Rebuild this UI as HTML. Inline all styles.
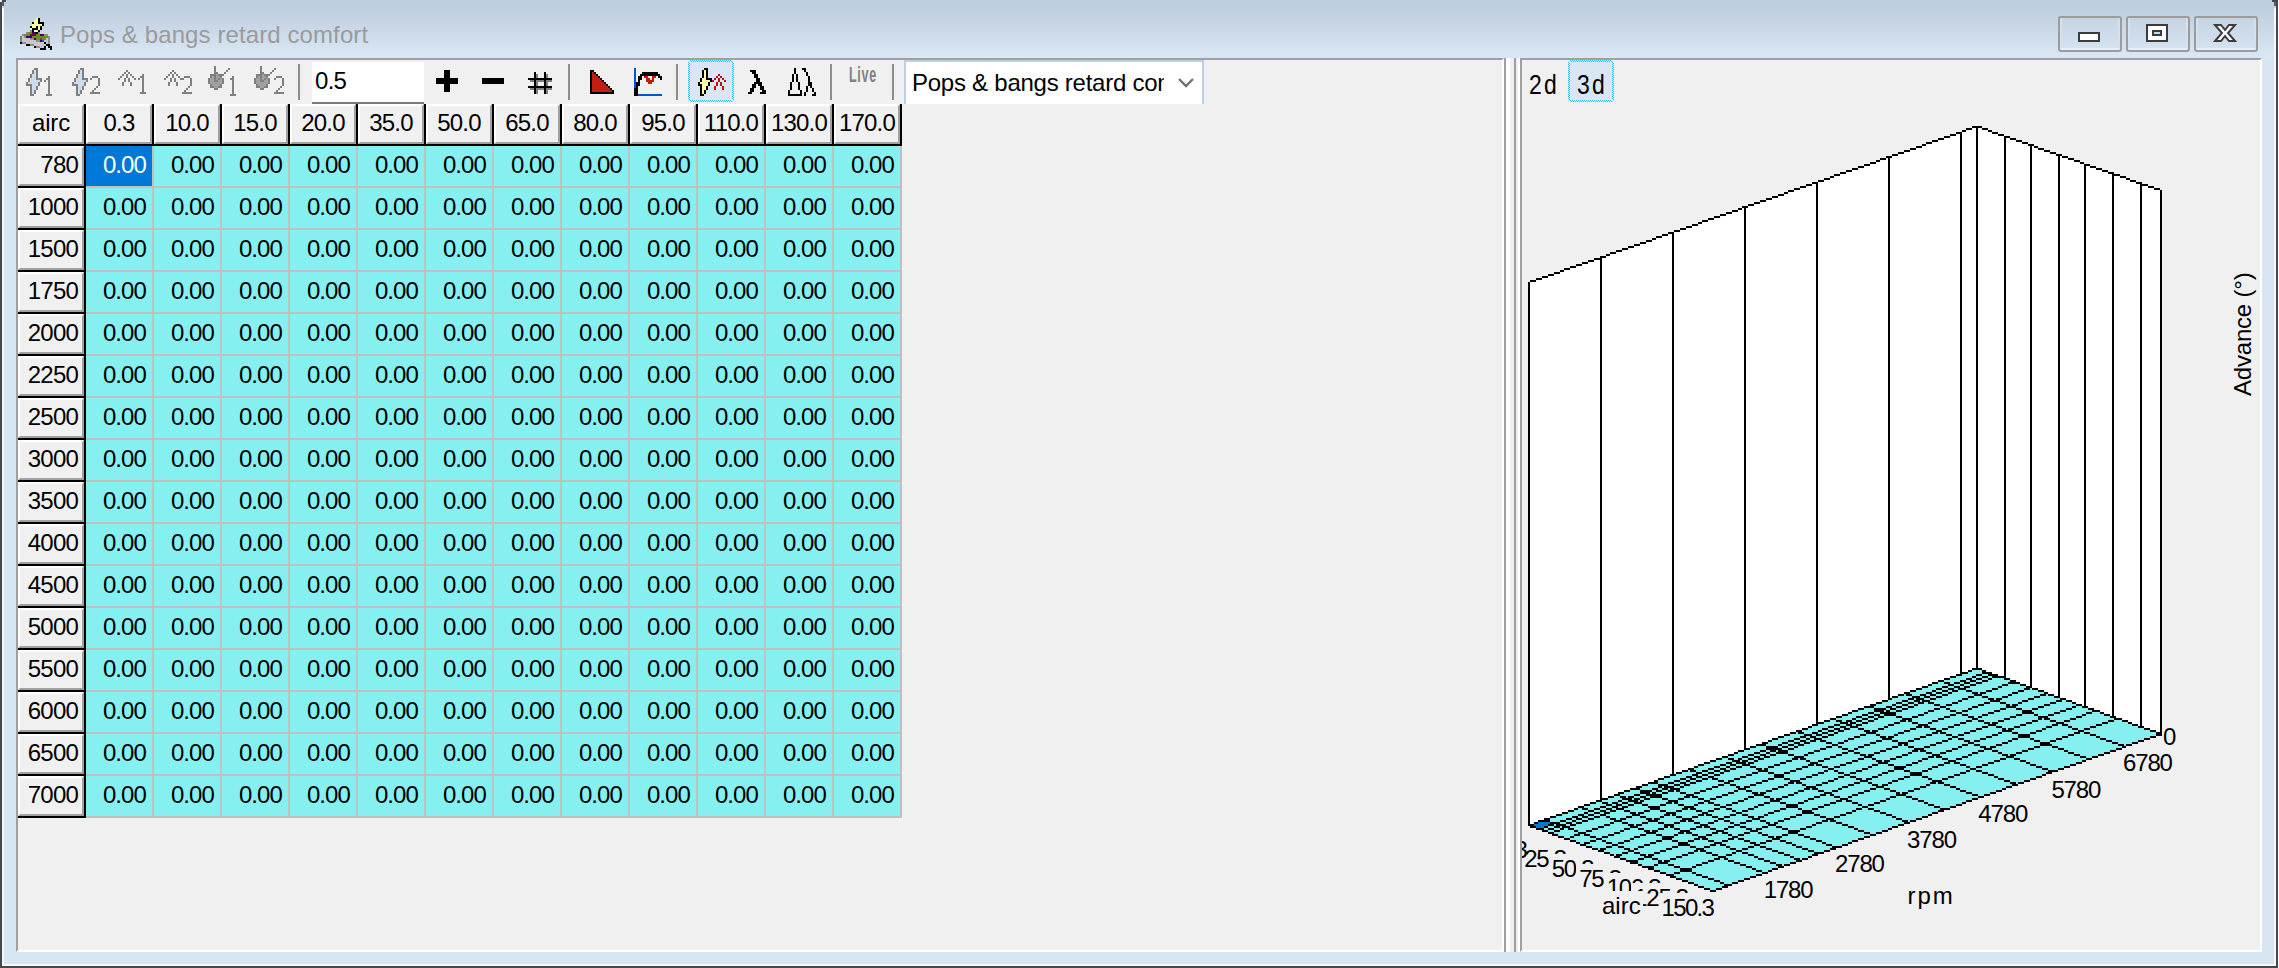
<!DOCTYPE html>
<html lang="en"><head><meta charset="utf-8"><title>Pops &amp; bangs retard comfort</title>
<style>
html,body{margin:0;padding:0}
body{width:2279px;height:968px;overflow:hidden;background:#fff;font-family:"Liberation Sans",sans-serif;font-size:24px;color:#000;position:relative}
div,span{box-sizing:border-box}
.abs{position:absolute}
#win{position:absolute;left:0;top:0;width:2278px;height:968px;border:2px solid #46484c;border-top:none;background:#c0cfdf}
#win2{position:absolute;left:0;top:0;width:2274px;height:966px;border:2px solid #f6f9fd;border-top:none;
 background:linear-gradient(#c0cfdf 0,#c0cfdf 10px,#c9d7e6 28px,#d3e0ee 44px,#d9e6f4 56px,#d9e6f4 100%);background-size:100% 58px;background-repeat:no-repeat;background-color:#d8e5f3}
#title{left:60px;top:21px;line-height:28px;color:#9b9b9b;white-space:pre;letter-spacing:.1px}
.wb{position:absolute;top:16px;width:64px;height:36px;border:2px solid #9c9c9c;border-radius:3px;background:linear-gradient(#c5d4e4,#cfdceb 60%,#d6e3f1);box-shadow:inset 0 -2px 0 #e6eef7, inset 2px 0 0 #d3e0ee, inset -2px 0 0 #d3e0ee}
.panel{position:absolute;top:58px;height:894px;background:#f0f0f0;border-style:solid;border-width:2px;border-color:#a0a0a0 #fff #fff #a0a0a0}
#tb{left:18px;top:60px;width:1484px;height:44px}
#inp{left:312px;top:62px;width:112px;height:42px;background:#fff;border-bottom:2px solid #7a7a7a;padding-left:3px;line-height:38px;letter-spacing:-0.7px}
#selb,#sel3{position:absolute;top:60px;width:46px;height:42px;background:#d9e6f4;border-radius:3px}
#combo{left:904px;top:60px;width:300px;height:44px;background:#fff;border:2px solid #bccfe5;border-bottom:none}
#combo span{position:absolute;left:6px;top:6px;width:252px;overflow:hidden;white-space:pre;line-height:30px;height:34px;letter-spacing:-0.25px}
#live{left:849px;top:62px;font-size:22px;line-height:26px;color:#808080;font-weight:bold;transform:scaleX(.57);transform-origin:0 0;letter-spacing:1.2px}
.hc{position:absolute;height:40px;width:66px;background:#f0f0f0;border-style:solid;border-width:2px;border-color:#fff #a0a0a0 #a0a0a0 #fff;line-height:33px;text-align:center;letter-spacing:-0.8px;white-space:pre}
.rh{text-align:right;padding-right:4px}
.k{position:absolute;background:#000}
#grid{left:86px;top:146px;width:816px;height:672px;display:grid;grid-template-columns:repeat(12,68px);grid-auto-rows:42px;background:#86f0f0}
#grid div{border-right:2px solid #c0c0c0;border-bottom:2px solid #c0c0c0;text-align:right;padding-right:6px;line-height:38px;letter-spacing:-0.9px;color:#000}
#grid div.s{background:#0078d7;color:#fff}
.v{position:absolute;top:58px;height:894px;width:2px}
.lb{position:absolute;white-space:pre;line-height:30px;height:30px;background:#f0f0f0;letter-spacing:-0.45px}
.pf{position:absolute;top:70px;font-size:28px;line-height:30px;transform:scaleX(.82);transform-origin:0 0;letter-spacing:2.6px}
</style></head>
<body>
<div id="win"></div><div class="abs" style="left:2px;top:0"><div id="win2"></div></div>
<div class="abs" style="left:2px;top:0;width:4px;height:2px;background:#46484c"></div><div class="abs" style="left:2px;top:2px;width:2px;height:4px;background:#5a5c60"></div><div class="abs" style="left:2px;top:6px;width:2px;height:2px;background:#c9d6e4"></div>
<div class="abs" style="left:2272px;top:0;width:4px;height:2px;background:#46484c"></div><div class="abs" style="left:2274px;top:2px;width:2px;height:4px;background:#5a5c60"></div><div class="abs" style="left:2274px;top:6px;width:2px;height:2px;background:#c9d6e4"></div>
<div class="abs" style="left:0;top:0;width:2px;height:2px;background:#dce8f4"></div>
<div id="title" class="abs">Pops &amp; bangs retard comfort</div>
<div class="wb" style="left:2058px"></div>
<div class="wb" style="left:2126px"></div>
<div class="wb" style="left:2194px"></div>
<div class="panel" style="left:16px;width:1488px"></div>
<div class="panel" style="left:1520px;width:742px"></div>
<div class="v" style="left:1504px;background:#a0a0a0"></div><div class="v" style="left:1506px;width:4px;background:#fff"></div><div class="v" style="left:1510px;width:4px;background:#f0f0f0"></div><div class="v" style="left:1514px;background:#a0a0a0"></div><div class="v" style="left:1516px;background:#f0f0f0"></div><div class="v" style="left:1518px;background:#fff"></div>
<div id="inp" class="abs">0.5</div>
<div id="selb" style="left:688px"></div>
<div id="sel3" style="left:1568px"></div>
<div id="combo" class="abs"><span>Pops &amp; bangs retard comfort</span></div>
<div id="live" class="abs">Live</div>
<div class="pf" style="left:1529px">2d</div><div class="pf" style="left:1577px">3d</div>
<div class="hc" style="left:18px;top:104px;letter-spacing:-.2px">airc</div>
<div class="hc" style="left:86px;top:104px">0.3</div>
<div class="hc" style="left:154px;top:104px">10.0</div>
<div class="hc" style="left:222px;top:104px">15.0</div>
<div class="hc" style="left:290px;top:104px">20.0</div>
<div class="hc" style="left:358px;top:104px">35.0</div>
<div class="hc" style="left:426px;top:104px">50.0</div>
<div class="hc" style="left:494px;top:104px">65.0</div>
<div class="hc" style="left:562px;top:104px">80.0</div>
<div class="hc" style="left:630px;top:104px">95.0</div>
<div class="hc" style="left:698px;top:104px">110.0</div>
<div class="hc" style="left:766px;top:104px">130.0</div>
<div class="hc" style="left:834px;top:104px">170.0</div>
<div class="hc rh" style="left:18px;top:146px">780</div>
<div class="hc rh" style="left:18px;top:188px">1000</div>
<div class="hc rh" style="left:18px;top:230px">1500</div>
<div class="hc rh" style="left:18px;top:272px">1750</div>
<div class="hc rh" style="left:18px;top:314px">2000</div>
<div class="hc rh" style="left:18px;top:356px">2250</div>
<div class="hc rh" style="left:18px;top:398px">2500</div>
<div class="hc rh" style="left:18px;top:440px">3000</div>
<div class="hc rh" style="left:18px;top:482px">3500</div>
<div class="hc rh" style="left:18px;top:524px">4000</div>
<div class="hc rh" style="left:18px;top:566px">4500</div>
<div class="hc rh" style="left:18px;top:608px">5000</div>
<div class="hc rh" style="left:18px;top:650px">5500</div>
<div class="hc rh" style="left:18px;top:692px">6000</div>
<div class="hc rh" style="left:18px;top:734px">6500</div>
<div class="hc rh" style="left:18px;top:776px">7000</div>
<div class="k" style="left:84px;top:104px;width:2px;height:714px"></div>
<div class="k" style="left:152px;top:104px;width:2px;height:42px"></div>
<div class="k" style="left:220px;top:104px;width:2px;height:42px"></div>
<div class="k" style="left:288px;top:104px;width:2px;height:42px"></div>
<div class="k" style="left:356px;top:104px;width:2px;height:42px"></div>
<div class="k" style="left:424px;top:104px;width:2px;height:42px"></div>
<div class="k" style="left:492px;top:104px;width:2px;height:42px"></div>
<div class="k" style="left:560px;top:104px;width:2px;height:42px"></div>
<div class="k" style="left:628px;top:104px;width:2px;height:42px"></div>
<div class="k" style="left:696px;top:104px;width:2px;height:42px"></div>
<div class="k" style="left:764px;top:104px;width:2px;height:42px"></div>
<div class="k" style="left:832px;top:104px;width:2px;height:42px"></div>
<div class="k" style="left:900px;top:104px;width:2px;height:42px"></div>
<div class="k" style="left:18px;top:144px;width:884px;height:2px"></div>
<div class="k" style="left:18px;top:186px;width:68px;height:2px"></div>
<div class="k" style="left:18px;top:228px;width:68px;height:2px"></div>
<div class="k" style="left:18px;top:270px;width:68px;height:2px"></div>
<div class="k" style="left:18px;top:312px;width:68px;height:2px"></div>
<div class="k" style="left:18px;top:354px;width:68px;height:2px"></div>
<div class="k" style="left:18px;top:396px;width:68px;height:2px"></div>
<div class="k" style="left:18px;top:438px;width:68px;height:2px"></div>
<div class="k" style="left:18px;top:480px;width:68px;height:2px"></div>
<div class="k" style="left:18px;top:522px;width:68px;height:2px"></div>
<div class="k" style="left:18px;top:564px;width:68px;height:2px"></div>
<div class="k" style="left:18px;top:606px;width:68px;height:2px"></div>
<div class="k" style="left:18px;top:648px;width:68px;height:2px"></div>
<div class="k" style="left:18px;top:690px;width:68px;height:2px"></div>
<div class="k" style="left:18px;top:732px;width:68px;height:2px"></div>
<div class="k" style="left:18px;top:774px;width:68px;height:2px"></div>
<div class="k" style="left:18px;top:816px;width:68px;height:2px"></div>
<div id="grid" class="abs"><div class="s">0.00</div><div>0.00</div><div>0.00</div><div>0.00</div><div>0.00</div><div>0.00</div><div>0.00</div><div>0.00</div><div>0.00</div><div>0.00</div><div>0.00</div><div>0.00</div>
<div>0.00</div><div>0.00</div><div>0.00</div><div>0.00</div><div>0.00</div><div>0.00</div><div>0.00</div><div>0.00</div><div>0.00</div><div>0.00</div><div>0.00</div><div>0.00</div>
<div>0.00</div><div>0.00</div><div>0.00</div><div>0.00</div><div>0.00</div><div>0.00</div><div>0.00</div><div>0.00</div><div>0.00</div><div>0.00</div><div>0.00</div><div>0.00</div>
<div>0.00</div><div>0.00</div><div>0.00</div><div>0.00</div><div>0.00</div><div>0.00</div><div>0.00</div><div>0.00</div><div>0.00</div><div>0.00</div><div>0.00</div><div>0.00</div>
<div>0.00</div><div>0.00</div><div>0.00</div><div>0.00</div><div>0.00</div><div>0.00</div><div>0.00</div><div>0.00</div><div>0.00</div><div>0.00</div><div>0.00</div><div>0.00</div>
<div>0.00</div><div>0.00</div><div>0.00</div><div>0.00</div><div>0.00</div><div>0.00</div><div>0.00</div><div>0.00</div><div>0.00</div><div>0.00</div><div>0.00</div><div>0.00</div>
<div>0.00</div><div>0.00</div><div>0.00</div><div>0.00</div><div>0.00</div><div>0.00</div><div>0.00</div><div>0.00</div><div>0.00</div><div>0.00</div><div>0.00</div><div>0.00</div>
<div>0.00</div><div>0.00</div><div>0.00</div><div>0.00</div><div>0.00</div><div>0.00</div><div>0.00</div><div>0.00</div><div>0.00</div><div>0.00</div><div>0.00</div><div>0.00</div>
<div>0.00</div><div>0.00</div><div>0.00</div><div>0.00</div><div>0.00</div><div>0.00</div><div>0.00</div><div>0.00</div><div>0.00</div><div>0.00</div><div>0.00</div><div>0.00</div>
<div>0.00</div><div>0.00</div><div>0.00</div><div>0.00</div><div>0.00</div><div>0.00</div><div>0.00</div><div>0.00</div><div>0.00</div><div>0.00</div><div>0.00</div><div>0.00</div>
<div>0.00</div><div>0.00</div><div>0.00</div><div>0.00</div><div>0.00</div><div>0.00</div><div>0.00</div><div>0.00</div><div>0.00</div><div>0.00</div><div>0.00</div><div>0.00</div>
<div>0.00</div><div>0.00</div><div>0.00</div><div>0.00</div><div>0.00</div><div>0.00</div><div>0.00</div><div>0.00</div><div>0.00</div><div>0.00</div><div>0.00</div><div>0.00</div>
<div>0.00</div><div>0.00</div><div>0.00</div><div>0.00</div><div>0.00</div><div>0.00</div><div>0.00</div><div>0.00</div><div>0.00</div><div>0.00</div><div>0.00</div><div>0.00</div>
<div>0.00</div><div>0.00</div><div>0.00</div><div>0.00</div><div>0.00</div><div>0.00</div><div>0.00</div><div>0.00</div><div>0.00</div><div>0.00</div><div>0.00</div><div>0.00</div>
<div>0.00</div><div>0.00</div><div>0.00</div><div>0.00</div><div>0.00</div><div>0.00</div><div>0.00</div><div>0.00</div><div>0.00</div><div>0.00</div><div>0.00</div><div>0.00</div>
<div>0.00</div><div>0.00</div><div>0.00</div><div>0.00</div><div>0.00</div><div>0.00</div><div>0.00</div><div>0.00</div><div>0.00</div><div>0.00</div><div>0.00</div><div>0.00</div>
</div>
<svg class="abs" style="left:0;top:0" width="2279" height="968" viewBox="0 0 2279 968" shape-rendering="crispEdges">
<defs><pattern id="ck" width="2" height="2" patternUnits="userSpaceOnUse"><rect width="1" height="1" fill="#3cc4ee"/><rect x="1" y="1" width="1" height="1" fill="#3cc4ee"/></pattern></defs>
<path fill="url(#ck)" d="M690 60h42v2h-42zM690 100h42v2h-42zM688 62h2v38h-2zM732 62h2v38h-2z"/>
<path fill="url(#ck)" d="M1570 60h42v2h-42zM1570 100h42v2h-42zM1568 62h2v38h-2zM1612 62h2v38h-2z"/>
<path fill="#ffffa0" d="M36 18h2v2h-2zM34 20h4v2h-4zM34 22h4v2h-4zM32 24h10v2h-10zM32 26h4v2h-4zM38 26h2v2h-2zM38 28h2v2h-2zM36 30h2v2h-2z"/>
<path fill="#000000" d="M38 18h2v2h-2zM38 20h2v2h-2zM32 22h2v2h-2zM38 22h6v2h-6zM42 24h2v2h-2zM30 26h2v2h-2zM36 26h2v2h-2zM40 26h2v2h-2zM32 28h6v2h-6zM40 28h2v2h-2zM32 30h2v2h-2zM38 30h2v2h-2zM36 32h2v2h-2zM20 42h2v2h-2zM44 42h2v2h-2zM26 44h4v2h-4zM46 44h4v2h-4zM34 46h2v2h-2zM44 46h2v2h-2zM48 46h4v2h-4zM40 48h6v2h-6zM50 48h2v2h-2z"/>
<path fill="#ffffc0" d="M30 28h2v2h-2z"/>
<path fill="#909090" d="M30 30h2v2h-2zM26 32h2v2h-2zM38 32h2v2h-2zM22 34h2v2h-2zM44 34h4v2h-4zM24 36h2v2h-2zM48 36h2v2h-2zM30 38h4v2h-4zM48 38h2v2h-2zM36 40h4v2h-4zM48 40h2v2h-2zM22 42h4v2h-4zM48 42h2v2h-2zM30 44h4v2h-4zM36 46h4v2h-4z"/>
<path fill="#ffffff" d="M34 30h2v2h-2z"/>
<path fill="#6b8e23" d="M28 32h4v2h-4zM24 34h6v2h-6zM36 34h4v2h-4zM32 36h16v2h-16zM36 38h4v2h-4zM42 38h4v2h-4z"/>
<path fill="#400060" d="M32 32h4v2h-4zM40 34h4v2h-4zM26 36h6v2h-6zM34 38h2v2h-2zM40 40h2v2h-2z"/>
<path fill="#800040" d="M30 34h6v2h-6z"/>
<path fill="#808080" d="M20 36h2v2h-2zM20 38h2v2h-2zM20 40h2v2h-2zM34 68h4v2h-4zM32 70h2v2h-2zM36 70h2v2h-2zM32 72h2v2h-2zM36 72h2v2h-2zM30 74h2v2h-2zM36 74h2v2h-2zM30 76h2v2h-2zM36 76h2v2h-2zM28 78h2v2h-2zM36 78h6v2h-6zM28 80h2v2h-2zM40 80h2v2h-2zM26 82h2v2h-2zM38 82h2v2h-2zM26 84h6v2h-6zM38 84h2v2h-2zM30 86h2v2h-2zM36 86h2v2h-2zM30 88h2v2h-2zM36 88h2v2h-2zM30 90h2v2h-2zM34 90h2v2h-2zM30 92h2v2h-2zM34 92h2v2h-2zM30 94h4v2h-4zM48 76h2v2h-2zM46 78h4v2h-4zM44 80h2v2h-2zM48 80h2v2h-2zM48 82h2v2h-2zM48 84h2v2h-2zM48 86h2v2h-2zM48 88h2v2h-2zM48 90h2v2h-2zM48 92h2v2h-2zM46 94h6v2h-6zM80 68h4v2h-4zM78 70h2v2h-2zM82 70h2v2h-2zM78 72h2v2h-2zM82 72h2v2h-2zM76 74h2v2h-2zM82 74h2v2h-2zM76 76h2v2h-2zM82 76h2v2h-2zM74 78h2v2h-2zM82 78h6v2h-6zM74 80h2v2h-2zM86 80h2v2h-2zM72 82h2v2h-2zM84 82h2v2h-2zM72 84h6v2h-6zM84 84h2v2h-2zM76 86h2v2h-2zM82 86h2v2h-2zM76 88h2v2h-2zM82 88h2v2h-2zM76 90h2v2h-2zM80 90h2v2h-2zM76 92h2v2h-2zM80 92h2v2h-2zM76 94h4v2h-4zM92 76h6v2h-6zM90 78h2v2h-2zM98 78h2v2h-2zM98 80h2v2h-2zM98 82h2v2h-2zM98 84h2v2h-2zM96 86h2v2h-2zM94 88h2v2h-2zM92 90h2v2h-2zM90 92h10v2h-10zM126 70h2v2h-2zM124 72h2v2h-2zM128 72h2v2h-2zM122 74h2v2h-2zM126 74h2v2h-2zM130 74h2v2h-2zM120 76h2v2h-2zM126 76h2v2h-2zM132 76h2v2h-2zM118 78h2v2h-2zM124 78h2v2h-2zM128 78h2v2h-2zM134 78h2v2h-2zM124 80h2v2h-2zM128 80h2v2h-2zM122 82h2v2h-2zM130 82h2v2h-2zM122 84h2v2h-2zM130 84h2v2h-2zM142 74h2v2h-2zM140 76h4v2h-4zM138 78h2v2h-2zM142 78h2v2h-2zM142 80h2v2h-2zM142 82h2v2h-2zM142 84h2v2h-2zM142 86h2v2h-2zM142 88h2v2h-2zM142 90h2v2h-2zM140 92h6v2h-6zM172 70h2v2h-2zM170 72h2v2h-2zM174 72h2v2h-2zM168 74h2v2h-2zM172 74h2v2h-2zM176 74h2v2h-2zM166 76h2v2h-2zM172 76h2v2h-2zM178 76h2v2h-2zM164 78h2v2h-2zM170 78h2v2h-2zM174 78h2v2h-2zM180 78h2v2h-2zM170 80h2v2h-2zM174 80h2v2h-2zM168 82h2v2h-2zM176 82h2v2h-2zM168 84h2v2h-2zM176 84h2v2h-2zM184 76h6v2h-6zM182 78h2v2h-2zM190 78h2v2h-2zM190 80h2v2h-2zM190 82h2v2h-2zM190 84h2v2h-2zM188 86h2v2h-2zM186 88h2v2h-2zM184 90h2v2h-2zM182 92h10v2h-10zM180 78h2v2h-2zM214 66h2v2h-2zM214 68h2v2h-2zM228 68h2v2h-2zM214 70h2v2h-2zM226 70h2v2h-2zM214 72h4v2h-4zM224 72h2v2h-2zM210 74h6v2h-6zM218 74h6v2h-6zM210 76h2v2h-2zM214 76h2v2h-2zM220 76h2v2h-2zM208 78h2v2h-2zM214 78h2v2h-2zM218 78h2v2h-2zM222 78h2v2h-2zM208 80h2v2h-2zM214 80h4v2h-4zM222 80h2v2h-2zM208 82h2v2h-2zM222 82h2v2h-2zM210 84h2v2h-2zM220 84h2v2h-2zM210 86h4v2h-4zM218 86h4v2h-4zM214 88h4v2h-4zM232 76h2v2h-2zM230 78h4v2h-4zM232 80h2v2h-2zM232 82h2v2h-2zM232 84h2v2h-2zM232 86h2v2h-2zM232 88h2v2h-2zM232 90h2v2h-2zM232 92h2v2h-2zM230 94h6v2h-6zM260 66h2v2h-2zM260 68h2v2h-2zM274 68h2v2h-2zM260 70h2v2h-2zM272 70h2v2h-2zM260 72h4v2h-4zM270 72h2v2h-2zM256 74h6v2h-6zM264 74h6v2h-6zM256 76h2v2h-2zM260 76h2v2h-2zM266 76h2v2h-2zM254 78h2v2h-2zM260 78h2v2h-2zM264 78h2v2h-2zM268 78h2v2h-2zM254 80h2v2h-2zM260 80h4v2h-4zM268 80h2v2h-2zM254 82h2v2h-2zM268 82h2v2h-2zM256 84h2v2h-2zM266 84h2v2h-2zM256 86h4v2h-4zM264 86h4v2h-4zM260 88h4v2h-4zM276 76h6v2h-6zM274 78h2v2h-2zM282 78h2v2h-2zM282 80h2v2h-2zM282 82h2v2h-2zM282 84h2v2h-2zM280 86h2v2h-2zM278 88h2v2h-2zM276 90h2v2h-2zM274 92h10v2h-10zM536 74h2v20h-2zM546 74h2v20h-2zM530 80h22v2h-22zM530 88h22v2h-22z"/>
<path fill="#c8c8c8" d="M22 36h2v2h-2zM22 38h8v2h-8zM46 38h2v2h-2zM22 40h14v2h-14zM44 40h4v2h-4zM26 42h18v2h-18zM46 42h2v2h-2zM34 44h12v2h-12zM40 46h4v2h-4z"/>
<path fill="#c02000" d="M40 38h2v2h-2z"/>
<path fill="#0060c0" d="M42 40h2v2h-2z"/>
<path fill="#cbdcec" d="M34 70h2v2h-2zM34 72h2v2h-2zM32 74h4v2h-4zM32 76h4v2h-4zM30 78h6v2h-6zM30 80h10v2h-10zM28 82h10v2h-10zM32 84h6v2h-6zM32 86h4v2h-4zM32 88h4v2h-4zM32 90h2v2h-2zM32 92h2v2h-2zM80 70h2v2h-2zM80 72h2v2h-2zM78 74h4v2h-4zM78 76h4v2h-4zM76 78h6v2h-6zM76 80h10v2h-10zM74 82h10v2h-10zM78 84h6v2h-6zM78 86h4v2h-4zM78 88h4v2h-4zM78 90h2v2h-2zM78 92h2v2h-2z"/>
<path fill="#a0a0a0" d="M216 74h2v2h-2zM212 76h2v2h-2zM216 76h4v2h-4zM210 78h4v2h-4zM216 78h2v2h-2zM220 78h2v2h-2zM210 80h4v2h-4zM218 80h4v2h-4zM210 82h12v2h-12zM212 84h8v2h-8zM214 86h4v2h-4zM262 74h2v2h-2zM258 76h2v2h-2zM262 76h4v2h-4zM256 78h4v2h-4zM262 78h2v2h-2zM266 78h2v2h-2zM256 80h4v2h-4zM264 80h4v2h-4zM256 82h12v2h-12zM258 84h8v2h-8zM260 86h4v2h-4z"/>
<path fill="#8c8c8c" d="M298 64h2v36h-2zM568 64h2v36h-2zM676 64h2v36h-2zM830 64h2v36h-2zM892 64h2v36h-2z"/>
<path fill="#000" d="M436 78h22v6h-22zM444 70h6v22h-6zM482 78h22v6h-22zM534 72h2v22h-2zM544 72h2v22h-2zM528 78h24v2h-24zM528 86h24v2h-24zM590 70h4v2h-4zM590 72h2v2h-2zM594 72h2v2h-2zM590 74h2v2h-2zM596 74h2v2h-2zM590 76h2v2h-2zM598 76h2v2h-2zM590 78h2v2h-2zM600 78h2v2h-2zM590 80h2v2h-2zM602 80h2v2h-2zM590 82h2v2h-2zM604 82h2v2h-2zM590 84h2v2h-2zM606 84h2v2h-2zM590 86h2v2h-2zM608 86h2v2h-2zM590 88h2v2h-2zM610 88h2v2h-2zM590 90h2v2h-2zM612 90h2v2h-2zM590 92h24v2h-24zM642 72h16v2h-16zM640 74h20v2h-20zM638 76h4v2h-4zM658 76h4v2h-4zM638 78h4v2h-4zM660 78h2v2h-2zM638 80h2v2h-2zM636 82h4v2h-4zM636 84h4v2h-4zM636 86h2v2h-2zM634 88h4v2h-4zM634 90h4v2h-4zM634 92h4v2h-4zM634 94h4v2h-4zM750 70h6v2h-6zM752 72h4v2h-4zM754 74h4v2h-4zM754 76h4v2h-4zM756 78h4v2h-4zM756 80h4v2h-4zM754 82h8v2h-8zM752 84h4v2h-4zM758 84h4v2h-4zM752 86h4v2h-4zM760 86h4v2h-4zM750 88h4v2h-4zM760 88h4v2h-4zM750 90h4v2h-4zM762 90h4v2h-4zM748 92h4v2h-4zM760 92h6v2h-6zM794 68h2v2h-2zM802 68h4v2h-4zM794 70h2v2h-2zM804 70h2v2h-2zM794 72h2v2h-2zM806 72h2v2h-2zM792 74h2v2h-2zM796 74h2v2h-2zM806 74h2v2h-2zM792 76h2v2h-2zM796 76h2v2h-2zM808 76h2v2h-2zM792 78h2v2h-2zM796 78h2v2h-2zM808 78h2v2h-2zM792 80h2v2h-2zM796 80h2v2h-2zM808 80h2v2h-2zM790 82h2v2h-2zM798 82h2v2h-2zM808 82h4v2h-4zM790 84h2v2h-2zM798 84h2v2h-2zM808 84h4v2h-4zM790 86h2v2h-2zM798 86h2v2h-2zM806 86h2v2h-2zM810 86h2v2h-2zM790 88h2v2h-2zM798 88h2v2h-2zM806 88h2v2h-2zM812 88h2v2h-2zM788 90h2v2h-2zM800 90h2v2h-2zM806 90h2v2h-2zM812 90h2v2h-2zM788 92h2v2h-2zM800 92h2v2h-2zM804 92h2v2h-2zM814 92h2v2h-2zM788 94h14v2h-14zM804 94h2v2h-2zM812 94h4v2h-4z"/>
<path fill="#c02010" d="M592 72h2v2h-2zM592 74h4v2h-4zM592 76h6v2h-6zM592 78h8v2h-8zM592 80h10v2h-10zM592 82h12v2h-12zM592 84h14v2h-14zM592 86h16v2h-16zM592 88h18v2h-18zM592 90h20v2h-20z"/>
<path fill="#0058c8" d="M634 68h2v2h-2zM634 70h2v2h-2zM634 72h2v2h-2zM634 74h2v2h-2zM634 76h2v2h-2zM634 78h2v2h-2zM634 80h2v2h-2zM634 82h2v2h-2zM634 84h2v2h-2zM634 86h2v2h-2zM638 94h24v2h-24z"/>
<path fill="#c81800" d="M644 76h4v2h-4zM652 76h4v2h-4zM646 78h4v2h-4zM652 78h2v2h-2zM646 80h8v2h-8zM648 82h4v2h-4z"/>
<path fill="#000" d="M704 68h4v2h-4zM702 70h2v2h-2zM706 70h2v2h-2zM702 72h2v2h-2zM706 72h2v2h-2zM702 74h2v2h-2zM706 74h2v2h-2zM702 76h2v2h-2zM706 76h2v2h-2zM700 78h2v2h-2zM706 78h6v2h-6zM700 80h2v2h-2zM710 80h2v2h-2zM698 82h2v2h-2zM708 82h2v2h-2zM698 84h4v2h-4zM708 84h2v2h-2zM700 86h2v2h-2zM706 86h2v2h-2zM700 88h2v2h-2zM706 88h2v2h-2zM700 90h2v2h-2zM704 90h2v2h-2zM700 92h2v2h-2zM704 92h2v2h-2zM700 94h4v2h-4z"/>
<path fill="#ffffa8" d="M704 70h2v2h-2zM704 72h2v2h-2zM704 74h2v2h-2zM704 76h2v2h-2zM702 78h4v2h-4zM702 80h8v2h-8zM700 82h8v2h-8zM702 84h6v2h-6zM702 86h4v2h-4zM702 88h4v2h-4zM702 90h2v2h-2zM702 92h2v2h-2z"/>
<path fill="#c01000" d="M718 74h2v2h-2zM716 76h2v2h-2zM720 76h2v2h-2zM714 78h2v2h-2zM718 78h2v2h-2zM722 78h2v2h-2zM712 80h2v2h-2zM718 80h2v2h-2zM724 80h2v2h-2zM716 82h2v2h-2zM720 82h2v2h-2zM716 84h2v2h-2zM720 84h2v2h-2zM714 86h2v2h-2zM722 86h2v2h-2zM714 88h2v2h-2zM722 88h2v2h-2z"/>
<rect x="2079" y="33" width="20" height="8" fill="#fff" stroke="#3c3c3c" stroke-width="2"/>
<rect x="2147" y="25" width="20" height="16" fill="#fff" stroke="#3c3c3c" stroke-width="2"/><rect x="2153" y="31" width="8" height="4" fill="#c9d8e8" stroke="#3c3c3c" stroke-width="2"/>
<path d="M2215 25h6l4 5 4-5h6l-7 8 7 8h-6l-4-5-4 5h-6l7-8z" fill="#fff" stroke="#3c3c3c" stroke-width="2" shape-rendering="auto"/>
<path d="M1179 79l7 7 7-7" fill="none" stroke="#707070" stroke-width="2.4" shape-rendering="auto"/>
<svg x="1522" y="60" width="738" height="890" viewBox="1522 60 738 890">
<polygon points="1529.0,825.5 1977.0,668.5 2161.0,734.0 2161.0,191.5 1977.0,127.5 1529.0,283.5" fill="#fff"/>
<polygon points="1529.0,825.5 1977.0,668.5 2161.0,734.0 1713.0,891.0" fill="#86f0f0"/>
<polygon points="1529.0,825.5 1544.8,819.9 1555.4,823.7 1539.5,829.2" fill="#0078d7"/>
<path d="M1529 282v544M1601 256v546M1673 232v544M1745 206v544M1817 182v544M1889 156v544M1961 132v544M1977 126v544M2005 136v544M2031 144v544M2059 154v544M2085 164v544M2113 172v546M2141 182v546M2161 190v546M1528 283h2M1530 281h6M1536 279h6M1542 277h6M1548 275h6M1554 273h6M1560 271h4M1564 269h6M1570 267h6M1576 265h6M1582 263h6M1588 261h6M1594 259h6M1600 257h6M1606 255h4M1610 253h6M1616 251h6M1622 249h6M1628 247h6M1634 245h6M1640 243h6M1646 241h6M1652 239h4M1656 237h6M1662 235h6M1668 233h6M1674 231h6M1680 229h6M1686 227h6M1692 225h6M1698 223h4M1702 221h6M1708 219h6M1714 217h6M1720 215h6M1726 213h6M1732 211h6M1738 209h4M1742 207h6M1748 205h6M1754 203h6M1760 201h6M1766 199h6M1772 197h6M1778 195h6M1784 193h4M1788 191h6M1794 189h6M1800 187h6M1806 185h6M1812 183h6M1818 181h6M1824 179h6M1830 177h4M1834 175h6M1840 173h6M1846 171h6M1852 169h6M1858 167h6M1864 165h6M1870 163h6M1876 161h4M1880 159h6M1886 157h6M1892 155h6M1898 153h6M1904 151h6M1910 149h6M1916 147h6M1922 145h4M1926 143h6M1932 141h6M1938 139h6M1944 137h6M1950 135h6M1956 133h6M1962 131h4M1966 129h6M1972 127h6M1976 127h6M1982 129h6M1988 131h4M1992 133h6M1998 135h6M2004 137h6M2010 139h6M2016 141h6M2022 143h6M2028 145h6M2034 147h4M2038 149h6M2044 151h6M2050 153h6M2056 155h6M2062 157h6M2068 159h6M2074 161h6M2080 163h4M2084 165h6M2090 167h6M2096 169h6M2102 171h6M2108 173h6M2114 175h6M2120 177h6M2126 179h4M2130 181h6M2136 183h6M2142 185h6M2148 187h6M2154 189h6M2160 191h2M1528 825h6M1534 823h4M1538 821h6M1544 819h6M1550 817h6M1556 815h6M1562 813h6M1568 811h6M1574 809h4M1578 807h6M1584 805h6M1590 803h6M1596 801h6M1602 799h6M1608 797h6M1614 795h4M1618 793h6M1624 791h6M1630 789h6M1636 787h6M1642 785h6M1648 783h6M1654 781h4M1658 779h6M1664 777h6M1670 775h6M1676 773h6M1682 771h6M1688 769h6M1694 767h4M1698 765h6M1704 763h6M1710 761h6M1716 759h6M1722 757h6M1728 755h6M1734 753h4M1738 751h6M1744 749h6M1750 747h6M1756 745h6M1762 743h6M1768 741h4M1772 739h6M1778 737h6M1784 735h6M1790 733h6M1796 731h6M1802 729h6M1808 727h4M1812 725h6M1818 723h6M1824 721h6M1830 719h6M1836 717h6M1842 715h6M1848 713h4M1852 711h6M1858 709h6M1864 707h6M1870 705h6M1876 703h6M1882 701h6M1888 699h4M1892 697h6M1898 695h6M1904 693h6M1910 691h6M1916 689h6M1922 687h6M1928 685h4M1932 683h6M1938 681h6M1944 679h6M1950 677h6M1956 675h6M1962 673h6M1968 671h4M1972 669h6M1538 829h6M1544 827h4M1548 825h6M1554 823h6M1560 821h6M1566 819h6M1572 817h6M1578 815h6M1584 813h4M1588 811h6M1594 809h6M1600 807h6M1606 805h6M1612 803h6M1618 801h4M1622 799h6M1628 797h6M1634 795h6M1640 793h6M1646 791h6M1652 789h6M1658 787h4M1662 785h6M1668 783h6M1674 781h6M1680 779h6M1686 777h6M1692 775h6M1698 773h4M1702 771h6M1708 769h6M1714 767h6M1720 765h6M1726 763h6M1732 761h6M1738 759h4M1742 757h6M1748 755h6M1754 753h6M1760 751h6M1766 749h6M1772 747h6M1778 745h4M1782 743h6M1788 741h6M1794 739h6M1800 737h6M1806 735h6M1812 733h6M1818 731h4M1822 729h6M1828 727h6M1834 725h6M1840 723h6M1846 721h6M1852 719h4M1856 717h6M1862 715h6M1868 713h6M1874 711h6M1880 709h6M1886 707h6M1892 705h4M1896 703h6M1902 701h6M1908 699h6M1914 697h6M1920 695h6M1926 693h6M1932 691h4M1936 689h6M1942 687h6M1948 685h6M1954 683h6M1960 681h6M1966 679h6M1972 677h4M1976 675h6M1982 673h6M1544 831h4M1548 829h6M1554 827h6M1560 825h6M1566 823h6M1572 821h4M1576 819h6M1582 817h6M1588 815h6M1594 813h6M1600 811h6M1606 809h6M1612 807h4M1616 805h6M1622 803h6M1628 801h6M1634 799h6M1640 797h6M1646 795h6M1652 793h4M1656 791h6M1662 789h6M1668 787h6M1674 785h6M1680 783h6M1686 781h4M1690 779h6M1696 777h6M1702 775h6M1708 773h6M1714 771h6M1720 769h6M1726 767h4M1730 765h6M1736 763h6M1742 761h6M1748 759h6M1754 757h6M1760 755h6M1766 753h4M1770 751h6M1776 749h6M1782 747h6M1788 745h6M1794 743h6M1800 741h6M1806 739h4M1810 737h6M1816 735h6M1822 733h6M1828 731h6M1834 729h6M1840 727h6M1846 725h4M1850 723h6M1856 721h6M1862 719h6M1868 717h6M1874 715h6M1880 713h6M1886 711h4M1890 709h6M1896 707h6M1902 705h6M1908 703h6M1914 701h6M1920 699h4M1924 697h6M1930 695h6M1936 693h6M1942 691h6M1948 689h6M1954 687h6M1960 685h4M1964 683h6M1970 681h6M1976 679h6M1982 677h6M1988 675h6M1550 833h4M1554 831h6M1560 829h4M1564 827h6M1570 825h6M1576 823h6M1582 821h6M1588 819h6M1594 817h6M1600 815h4M1604 813h6M1610 811h6M1616 809h6M1622 807h6M1628 805h6M1634 803h6M1640 801h4M1644 799h6M1650 797h6M1656 795h6M1662 793h6M1668 791h6M1674 789h6M1680 787h4M1684 785h6M1690 783h6M1696 781h6M1702 779h6M1708 777h6M1714 775h6M1720 773h4M1724 771h6M1730 769h6M1736 767h6M1742 765h6M1748 763h6M1754 761h4M1758 759h6M1764 757h6M1770 755h6M1776 753h6M1782 751h6M1788 749h6M1794 747h4M1798 745h6M1804 743h6M1810 741h6M1816 739h6M1822 737h6M1828 735h6M1834 733h4M1838 731h6M1844 729h6M1850 727h6M1856 725h6M1862 723h6M1868 721h6M1874 719h4M1878 717h6M1884 715h6M1890 713h6M1896 711h6M1902 709h6M1908 707h6M1914 705h4M1918 703h6M1924 701h6M1930 699h6M1936 697h6M1942 695h6M1948 693h4M1952 691h6M1958 689h6M1964 687h6M1970 685h6M1976 683h6M1982 681h6M1988 679h4M1992 677h8M1566 839h4M1570 837h4M1574 835h6M1580 833h6M1586 831h6M1592 829h6M1598 827h6M1604 825h6M1610 823h4M1614 821h6M1620 819h6M1626 817h6M1632 815h6M1638 813h6M1644 811h6M1650 809h4M1654 807h6M1660 805h6M1666 803h6M1672 801h6M1678 799h6M1684 797h6M1690 795h4M1694 793h6M1700 791h6M1706 789h6M1712 787h6M1718 785h6M1724 783h4M1728 781h6M1734 779h6M1740 777h6M1746 775h6M1752 773h6M1758 771h6M1764 769h4M1768 767h6M1774 765h6M1780 763h6M1786 761h6M1792 759h6M1798 757h6M1804 755h4M1808 753h6M1814 751h6M1820 749h6M1826 747h6M1832 745h6M1838 743h6M1844 741h4M1848 739h6M1854 737h6M1860 735h6M1866 733h6M1872 731h6M1878 729h6M1884 727h4M1888 725h6M1894 723h6M1900 721h6M1906 719h6M1912 717h6M1918 715h6M1924 713h4M1928 711h6M1934 709h6M1940 707h6M1946 705h6M1952 703h6M1958 701h4M1962 699h6M1968 697h6M1974 695h6M1980 693h6M1986 691h6M1992 689h6M1998 687h4M2002 685h6M2008 683h6M2014 681h2M1582 845h2M1584 843h6M1590 841h6M1596 839h6M1602 837h6M1608 835h6M1614 833h6M1620 831h4M1624 829h6M1630 827h6M1636 825h6M1642 823h6M1648 821h6M1654 819h6M1660 817h4M1664 815h6M1670 813h6M1676 811h6M1682 809h6M1688 807h6M1694 805h4M1698 803h6M1704 801h6M1710 799h6M1716 797h6M1722 795h6M1728 793h6M1734 791h4M1738 789h6M1744 787h6M1750 785h6M1756 783h6M1762 781h6M1768 779h6M1774 777h4M1778 775h6M1784 773h6M1790 771h6M1796 769h6M1802 767h6M1808 765h6M1814 763h4M1818 761h6M1824 759h6M1830 757h6M1836 755h6M1842 753h6M1848 751h6M1854 749h4M1858 747h6M1864 745h6M1870 743h6M1876 741h6M1882 739h6M1888 737h6M1894 735h4M1898 733h6M1904 731h6M1910 729h6M1916 727h6M1922 725h6M1928 723h4M1932 721h6M1938 719h6M1944 717h6M1950 715h6M1956 713h6M1962 711h6M1968 709h4M1972 707h6M1978 705h6M1984 703h6M1990 701h6M1996 699h6M2002 697h6M2008 695h4M2012 693h6M2018 691h6M2024 689h6M2030 687h2M1598 851h2M1600 849h6M1606 847h6M1612 845h6M1618 843h6M1624 841h6M1630 839h4M1634 837h6M1640 835h6M1646 833h6M1652 831h6M1658 829h6M1664 827h4M1668 825h6M1674 823h6M1680 821h6M1686 819h6M1692 817h6M1698 815h6M1704 813h4M1708 811h6M1714 809h6M1720 807h6M1726 805h6M1732 803h6M1738 801h6M1744 799h4M1748 797h6M1754 795h6M1760 793h6M1766 791h6M1772 789h6M1778 787h6M1784 785h4M1788 783h6M1794 781h6M1800 779h6M1806 777h6M1812 775h6M1818 773h6M1824 771h4M1828 769h6M1834 767h6M1840 765h6M1846 763h6M1852 761h6M1858 759h6M1864 757h4M1868 755h6M1874 753h6M1880 751h6M1886 749h6M1892 747h6M1898 745h4M1902 743h6M1908 741h6M1914 739h6M1920 737h6M1926 735h6M1932 733h6M1938 731h4M1942 729h6M1948 727h6M1954 725h6M1960 723h6M1966 721h6M1972 719h6M1978 717h4M1982 715h6M1988 713h6M1994 711h6M2000 709h6M2006 707h6M2012 705h6M2018 703h4M2022 701h6M2028 699h6M2034 697h6M2040 695h6M2046 693h2M1614 857h2M1616 855h6M1622 853h6M1628 851h6M1634 849h4M1638 847h6M1644 845h6M1650 843h6M1656 841h6M1662 839h6M1668 837h6M1674 835h4M1678 833h6M1684 831h6M1690 829h6M1696 827h6M1702 825h6M1708 823h6M1714 821h4M1718 819h6M1724 817h6M1730 815h6M1736 813h6M1742 811h6M1748 809h6M1754 807h4M1758 805h6M1764 803h6M1770 801h6M1776 799h6M1782 797h6M1788 795h6M1794 793h4M1798 791h6M1804 789h6M1810 787h6M1816 785h6M1822 783h6M1828 781h6M1834 779h4M1838 777h6M1844 775h6M1850 773h6M1856 771h6M1862 769h6M1868 767h4M1872 765h6M1878 763h6M1884 761h6M1890 759h6M1896 757h6M1902 755h6M1908 753h4M1912 751h6M1918 749h6M1924 747h6M1930 745h6M1936 743h6M1942 741h6M1948 739h4M1952 737h6M1958 735h6M1964 733h6M1970 731h6M1976 729h6M1982 727h6M1988 725h4M1992 723h6M1998 721h6M2004 719h6M2010 717h6M2016 715h6M2022 713h6M2028 711h4M2032 709h6M2038 707h6M2044 705h6M2050 703h6M2056 701h6M2062 699h2M1630 863h2M1632 861h6M1638 859h6M1644 857h4M1648 855h6M1654 853h6M1660 851h6M1666 849h6M1672 847h6M1678 845h6M1684 843h4M1688 841h6M1694 839h6M1700 837h6M1706 835h6M1712 833h6M1718 831h6M1724 829h4M1728 827h6M1734 825h6M1740 823h6M1746 821h6M1752 819h6M1758 817h6M1764 815h4M1768 813h6M1774 811h6M1780 809h6M1786 807h6M1792 805h6M1798 803h6M1804 801h4M1808 799h6M1814 797h6M1820 795h6M1826 793h6M1832 791h6M1838 789h4M1842 787h6M1848 785h6M1854 783h6M1860 781h6M1866 779h6M1872 777h6M1878 775h4M1882 773h6M1888 771h6M1894 769h6M1900 767h6M1906 765h6M1912 763h6M1918 761h4M1922 759h6M1928 757h6M1934 755h6M1940 753h6M1946 751h6M1952 749h6M1958 747h4M1962 745h6M1968 743h6M1974 741h6M1980 739h6M1986 737h6M1992 735h6M1998 733h4M2002 731h6M2008 729h6M2014 727h6M2020 725h6M2026 723h6M2032 721h6M2038 719h4M2042 717h6M2048 715h6M2054 713h6M2060 711h6M2066 709h6M2072 707h4M2076 705h4M1646 867h8M1654 865h4M1658 863h6M1664 861h6M1670 859h6M1676 857h6M1682 855h6M1688 853h6M1694 851h4M1698 849h6M1704 847h6M1710 845h6M1716 843h6M1722 841h6M1728 839h6M1734 837h4M1738 835h6M1744 833h6M1750 831h6M1756 829h6M1762 827h6M1768 825h6M1774 823h4M1778 821h6M1784 819h6M1790 817h6M1796 815h6M1802 813h6M1808 811h4M1812 809h6M1818 807h6M1824 805h6M1830 803h6M1836 801h6M1842 799h6M1848 797h4M1852 795h6M1858 793h6M1864 791h6M1870 789h6M1876 787h6M1882 785h6M1888 783h4M1892 781h6M1898 779h6M1904 777h6M1910 775h6M1916 773h6M1922 771h6M1928 769h4M1932 767h6M1938 765h6M1944 763h6M1950 761h6M1956 759h6M1962 757h6M1968 755h4M1972 753h6M1978 751h6M1984 749h6M1990 747h6M1996 745h6M2002 743h6M2008 741h4M2012 739h6M2018 737h6M2024 735h6M2030 733h6M2036 731h6M2042 729h4M2046 727h6M2052 725h6M2058 723h6M2064 721h6M2070 719h6M2076 717h6M2082 715h4M2086 713h6M2092 711h4M1668 875h6M1674 873h6M1680 871h6M1686 869h6M1692 867h4M1696 865h6M1702 863h6M1708 861h6M1714 859h6M1720 857h6M1726 855h6M1732 853h4M1736 851h6M1742 849h6M1748 847h6M1754 845h6M1760 843h6M1766 841h6M1772 839h4M1776 837h6M1782 835h6M1788 833h6M1794 831h6M1800 829h6M1806 827h6M1812 825h4M1816 823h6M1822 821h6M1828 819h6M1834 817h6M1840 815h6M1846 813h6M1852 811h4M1856 809h6M1862 807h6M1868 805h6M1874 803h6M1880 801h6M1886 799h4M1890 797h6M1896 795h6M1902 793h6M1908 791h6M1914 789h6M1920 787h6M1926 785h4M1930 783h6M1936 781h6M1942 779h6M1948 777h6M1954 775h6M1960 773h6M1966 771h4M1970 769h6M1976 767h6M1982 765h6M1988 763h6M1994 761h6M2000 759h6M2006 757h4M2010 755h6M2016 753h6M2022 751h6M2028 749h6M2034 747h6M2040 745h6M2046 743h4M2050 741h6M2056 739h6M2062 737h6M2068 735h6M2074 733h6M2080 731h4M2084 729h6M2090 727h6M2096 725h6M2102 723h6M2108 721h6M2114 719h4M1712 891h4M1716 889h6M1722 887h6M1728 885h4M1732 883h6M1738 881h6M1744 879h6M1750 877h6M1756 875h6M1762 873h6M1768 871h4M1772 869h6M1778 867h6M1784 865h6M1790 863h6M1796 861h6M1802 859h6M1808 857h4M1812 855h6M1818 853h6M1824 851h6M1830 849h6M1836 847h6M1842 845h6M1848 843h4M1852 841h6M1858 839h6M1864 837h6M1870 835h6M1876 833h6M1882 831h6M1888 829h4M1892 827h6M1898 825h6M1904 823h6M1910 821h6M1916 819h6M1922 817h6M1928 815h4M1932 813h6M1938 811h6M1944 809h6M1950 807h6M1956 805h6M1962 803h4M1966 801h6M1972 799h6M1978 797h6M1984 795h6M1990 793h6M1996 791h6M2002 789h4M2006 787h6M2012 785h6M2018 783h6M2024 781h6M2030 779h6M2036 777h6M2042 775h4M2046 773h6M2052 771h6M2058 769h6M2064 767h6M2070 765h6M2076 763h6M2082 761h4M2086 759h6M2092 757h6M2098 755h6M2104 753h6M2110 751h6M2116 749h6M2122 747h4M2126 745h6M2132 743h6M2138 741h6M2144 739h6M2150 737h6M2156 735h6M1528 825h2M1530 827h6M1536 829h6M1542 831h6M1548 833h4M1552 835h6M1558 837h6M1564 839h6M1570 841h6M1576 843h4M1580 845h6M1586 847h6M1592 849h6M1598 851h6M1604 853h6M1610 855h4M1614 857h6M1620 859h6M1626 861h6M1632 863h6M1638 865h4M1642 867h6M1648 869h6M1654 871h6M1660 873h6M1666 875h4M1670 877h6M1676 879h6M1682 881h6M1688 883h6M1694 885h4M1698 887h6M1704 889h6M1710 891h4M1544 821h6M1550 823h6M1556 825h6M1562 827h6M1568 829h6M1574 831h4M1578 833h6M1584 835h6M1590 837h6M1596 839h6M1602 841h4M1606 843h6M1612 845h6M1618 847h6M1624 849h6M1630 851h4M1634 853h6M1640 855h6M1646 857h6M1652 859h6M1658 861h4M1662 863h6M1668 865h6M1674 867h6M1680 869h6M1686 871h6M1692 873h4M1696 875h6M1702 877h6M1708 879h6M1714 881h6M1720 883h4M1724 885h6M1580 807h2M1582 809h6M1588 811h6M1594 813h6M1600 815h6M1606 817h4M1610 819h6M1616 821h6M1622 823h6M1628 825h6M1634 827h4M1638 829h6M1644 831h6M1650 833h6M1656 835h6M1662 837h6M1668 839h4M1672 841h6M1678 843h6M1684 845h6M1690 847h6M1696 849h4M1700 851h6M1706 853h6M1712 855h6M1718 857h6M1724 859h4M1728 861h6M1734 863h6M1740 865h6M1746 867h6M1752 869h4M1756 871h6M1762 873h4M1598 801h4M1602 803h6M1608 805h4M1612 807h6M1618 809h6M1624 811h6M1630 813h6M1636 815h4M1640 817h6M1646 819h6M1652 821h6M1658 823h6M1664 825h6M1670 827h4M1674 829h6M1680 831h6M1686 833h6M1692 835h6M1698 837h4M1702 839h6M1708 841h6M1714 843h6M1720 845h6M1726 847h4M1730 849h6M1736 851h6M1742 853h6M1748 855h6M1754 857h4M1758 859h6M1764 861h6M1770 863h6M1776 865h6M1782 867h2M1616 795h4M1620 797h6M1626 799h6M1632 801h6M1638 803h4M1642 805h6M1648 807h6M1654 809h6M1660 811h6M1666 813h6M1672 815h4M1676 817h6M1682 819h6M1688 821h6M1694 823h6M1700 825h4M1704 827h6M1710 829h6M1716 831h6M1722 833h6M1728 835h4M1732 837h6M1738 839h6M1744 841h6M1750 843h6M1756 845h4M1760 847h6M1766 849h6M1772 851h6M1778 853h6M1784 855h6M1790 857h4M1794 859h6M1800 861h2M1634 789h6M1640 791h6M1646 793h4M1650 795h6M1656 797h6M1662 799h6M1668 801h6M1674 803h4M1678 805h6M1684 807h6M1690 809h6M1696 811h6M1702 813h4M1706 815h6M1712 817h6M1718 819h6M1724 821h6M1730 823h4M1734 825h6M1740 827h6M1746 829h6M1752 831h6M1758 833h4M1762 835h6M1768 837h6M1774 839h6M1780 841h6M1786 843h6M1792 845h4M1796 847h6M1802 849h6M1808 851h6M1814 853h6M1652 783h6M1658 785h6M1664 787h6M1670 789h6M1676 791h4M1680 793h6M1686 795h6M1692 797h6M1698 799h6M1704 801h4M1708 803h6M1714 805h6M1720 807h6M1726 809h6M1732 811h4M1736 813h6M1742 815h6M1748 817h6M1754 819h6M1760 821h6M1766 823h4M1770 825h6M1776 827h6M1782 829h6M1788 831h6M1794 833h4M1798 835h6M1804 837h6M1810 839h6M1816 841h6M1822 843h4M1826 845h6M1832 847h6M1688 769h2M1690 771h6M1696 773h6M1702 775h6M1708 777h4M1712 779h6M1718 781h6M1724 783h6M1730 785h6M1736 787h4M1740 789h6M1746 791h6M1752 793h6M1758 795h6M1764 797h6M1770 799h4M1774 801h6M1780 803h6M1786 805h6M1792 807h6M1798 809h4M1802 811h6M1808 813h6M1814 815h6M1820 817h6M1826 819h4M1830 821h6M1836 823h6M1842 825h6M1848 827h6M1854 829h4M1858 831h6M1864 833h6M1870 835h4M1724 757h4M1728 759h6M1734 761h6M1740 763h6M1746 765h4M1750 767h6M1756 769h6M1762 771h6M1768 773h6M1774 775h4M1778 777h6M1784 779h6M1790 781h6M1796 783h6M1802 785h4M1806 787h6M1812 789h6M1818 791h6M1824 793h6M1830 795h4M1834 797h6M1840 799h6M1846 801h6M1852 803h6M1858 805h4M1862 807h6M1868 809h6M1874 811h6M1880 813h6M1886 815h6M1892 817h4M1896 819h6M1902 821h6M1908 823h2M1760 745h6M1766 747h6M1772 749h6M1778 751h4M1782 753h6M1788 755h6M1794 757h6M1800 759h6M1806 761h4M1810 763h6M1816 765h6M1822 767h6M1828 769h6M1834 771h4M1838 773h6M1844 775h6M1850 777h6M1856 779h6M1862 781h6M1868 783h4M1872 785h6M1878 787h6M1884 789h6M1890 791h6M1896 793h4M1900 795h6M1906 797h6M1912 799h6M1918 801h6M1924 803h4M1928 805h6M1934 807h6M1940 809h6M1796 731h2M1798 733h6M1804 735h6M1810 737h4M1814 739h6M1820 741h6M1826 743h6M1832 745h6M1838 747h4M1842 749h6M1848 751h6M1854 753h6M1860 755h6M1866 757h6M1872 759h4M1876 761h6M1882 763h6M1888 765h6M1894 767h6M1900 769h4M1904 771h6M1910 773h6M1916 775h6M1922 777h6M1928 779h4M1932 781h6M1938 783h6M1944 785h6M1950 787h6M1956 789h4M1960 791h6M1966 793h6M1972 795h6M1978 797h4M1832 719h4M1836 721h6M1842 723h6M1848 725h4M1852 727h6M1858 729h6M1864 731h6M1870 733h6M1876 735h4M1880 737h6M1886 739h6M1892 741h6M1898 743h6M1904 745h4M1908 747h6M1914 749h6M1920 751h6M1926 753h6M1932 755h4M1936 757h6M1942 759h6M1948 761h6M1954 763h6M1960 765h6M1966 767h4M1970 769h6M1976 771h6M1982 773h6M1988 775h6M1994 777h4M1998 779h6M2004 781h6M2010 783h6M2016 785h2M1868 707h6M1874 709h6M1880 711h4M1884 713h6M1890 715h6M1896 717h6M1902 719h6M1908 721h4M1912 723h6M1918 725h6M1924 727h6M1930 729h6M1936 731h4M1940 733h6M1946 735h6M1952 737h6M1958 739h6M1964 741h6M1970 743h4M1974 745h6M1980 747h6M1986 749h6M1992 751h6M1998 753h4M2002 755h6M2008 757h6M2014 759h6M2020 761h6M2026 763h4M2030 765h6M2036 767h6M2042 769h6M2048 771h6M1904 693h2M1906 695h6M1912 697h4M1916 699h6M1922 701h6M1928 703h6M1934 705h6M1940 707h6M1946 709h4M1950 711h6M1956 713h6M1962 715h6M1968 717h6M1974 719h4M1978 721h6M1984 723h6M1990 725h6M1996 727h6M2002 729h4M2006 731h6M2012 733h6M2018 735h6M2024 737h6M2030 739h4M2034 741h6M2040 743h6M2046 745h6M2052 747h6M2058 749h6M2064 751h4M2068 753h6M2074 755h6M2080 757h6M2086 759h4M1940 681h4M1944 683h6M1950 685h4M1954 687h6M1960 689h6M1966 691h6M1972 693h6M1978 695h4M1982 697h6M1988 699h6M1994 701h6M2000 703h6M2006 705h4M2010 707h6M2016 709h6M2022 711h6M2028 713h6M2034 715h4M2038 717h6M2044 719h6M2050 721h6M2056 723h6M2062 725h6M2068 727h4M2072 729h6M2078 731h6M2084 733h6M2090 735h6M2096 737h4M2100 739h6M2106 741h6M2112 743h6M2118 745h6M2124 747h2M1976 669h6M1982 671h4M1986 673h6M1992 675h6M1998 677h6M2004 679h6M2010 681h4M2014 683h6M2020 685h6M2026 687h6M2032 689h6M2038 691h6M2044 693h4M2048 695h6M2054 697h6M2060 699h6M2066 701h6M2072 703h4M2076 705h6M2082 707h6M2088 709h6M2094 711h6M2100 713h4M2104 715h6M2110 717h6M2116 719h6M2122 721h6M2128 723h4M2132 725h6M2138 727h6M2144 729h6M2150 731h6M2156 733h4M2160 735h2" stroke="#000" stroke-width="2" fill="none"/>
</svg></svg>
<div class="abs" style="left:1522px;top:60px;width:738px;height:890px;overflow:hidden"><div class="abs" style="left:-1522px;top:-60px">
<div class="lb" style="left:1524.3px;top:844.4px;letter-spacing:-1.3px">25.3</div>
<div class="lb" style="left:1497.0px;top:834.8px;letter-spacing:-1.3px;background:none">0.3</div>
<div class="lb" style="left:1548.8px;top:854.0px;letter-spacing:-1.3px;padding-left:3px">50.3</div>
<div class="lb" style="left:1576.3px;top:863.6px;letter-spacing:-1.3px;padding-left:3px">75.3</div>
<div class="lb" style="left:1603.8px;top:873.3px;letter-spacing:-1.3px;padding-left:3px">100.3</div>
<div class="lb" style="left:1631.3px;top:882.9px;letter-spacing:-1.3px;padding-left:3px">125.3</div>
<div class="lb" style="left:1602.0px;top:890.7px;padding-right:2px;letter-spacing:0">airc</div>
<div class="lb" style="left:1658.5px;top:892.7px;letter-spacing:-1.65px;padding-left:3px">150.3</div>
<div class="lb" style="left:1763.7px;top:874.6px;background:none;letter-spacing:-1.15px">1780</div>
<div class="lb" style="left:1835.0px;top:848.9px;background:none;letter-spacing:-1.15px">2780</div>
<div class="lb" style="left:1907.1px;top:824.7px;background:none;letter-spacing:-1.15px">3780</div>
<div class="lb" style="left:1978.3px;top:798.5px;background:none;letter-spacing:-1.15px">4780</div>
<div class="lb" style="left:2051.4px;top:774.8px;background:none;letter-spacing:-1.15px">5780</div>
<div class="lb" style="left:2123.0px;top:748.2px;background:none;letter-spacing:-1.15px">6780</div>
<div class="lb" style="left:2163.0px;top:722.1px;background:none">0</div>
<div class="lb" style="left:1907.5px;top:880.6px;background:none;letter-spacing:1.9px">rpm</div>
<div class="lb" style="left:2227.5px;top:396px;background:none;transform:rotate(-90deg);transform-origin:0 0;letter-spacing:-.2px">Advance (°)</div>
</div></div>
</body></html>
